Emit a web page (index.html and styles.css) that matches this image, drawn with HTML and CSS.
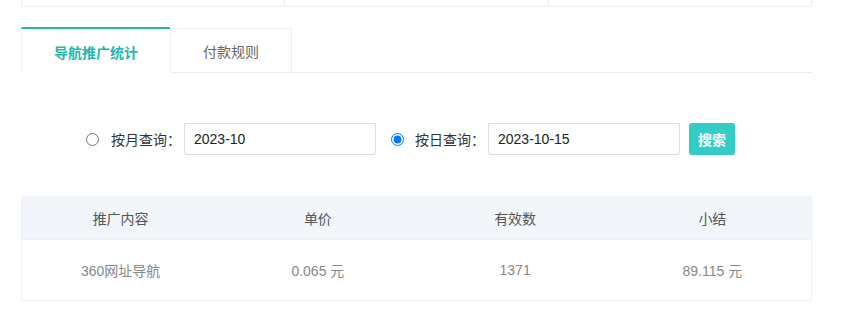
FILE: index.html
```html
<!DOCTYPE html>
<html lang="zh-CN">
<head>
<meta charset="utf-8">
<link rel="stylesheet" href="styles.css">
</head>
<body>
<div class="page">
  <div class="topbox">
    <div class="topcell"></div>
    <div class="topcell"></div>
    <div class="topcell"></div>
  </div>
  <div class="tabs">
    <div class="tab active">导航推广统计</div>
    <div class="tab">付款规则</div>
  </div>
  <div class="filters">
    <input class="radio" type="radio" name="mode">
    <span class="label">按月查询：</span>
    <input class="field" type="text" value="2023-10">
    <input class="radio radio2" type="radio" name="mode" checked>
    <span class="label">按日查询：</span>
    <input class="field" type="text" value="2023-10-15">
    <button class="btn">搜索</button>
  </div>
  <div class="table">
    <div class="row head">
      <div class="cell">推广内容</div>
      <div class="cell">单价</div>
      <div class="cell">有效数</div>
      <div class="cell">小结</div>
    </div>
    <div class="row body">
      <div class="cell">360网址导航</div>
      <div class="cell">0.065 元</div>
      <div class="cell">1371</div>
      <div class="cell">89.115 元</div>
    </div>
  </div>
</div>
</body>
</html>
```
FILE: styles.css
```css
* { box-sizing: border-box; }
html, body { margin: 0; padding: 0; background: #fff; }
body {
  font-family: "Liberation Sans", "Noto Sans CJK SC", sans-serif;
  font-size: 14px;
  color: #333;
}
.page {
  width: 791px;
  margin-left: 21px;
}
.topbox {
  display: grid;
  grid-template-columns: 263px 264px 264px;
  height: 7px;
  border: 1px solid #e9eff5;
  border-top: none;
}
.topcell { border-right: 1px solid #e9eff5; }
.topcell:last-child { border-right: none; }
.tabs {
  margin-top: 20px;
  height: 46px;
  display: flex;
  align-items: flex-end;
  border-bottom: 1px solid #e9eff5;
}
.tab {
  display: flex;
  align-items: center;
  justify-content: center;
  color: #666;
  font-size: 14px;
  background: #fff;
}
.tab.active {
  width: 149px;
  height: 46px;
  margin-bottom: -1px;
  border-top: 2px solid #1fb9b0;
  border-left: 1px solid #e9eff5;
  color: #1fb9b0;
  font-weight: 600;
  padding-top: 1px;
}
.tab:not(.active) {
  width: 122px;
  height: 44px;
  border-top: 1px solid #e9eff5;
  border-left: 1px solid #e9eff5;
  border-right: 1px solid #e9eff5;
}
.filters {
  display: flex;
  align-items: center;
  margin-top: 50px;
  height: 32px;
  padding-left: 65px;
}
.radio {
  width: 13px;
  height: 13px;
  margin: 0 12px 0 0;
}
.radio2 { margin-left: 15px; margin-right: 11px; }
.label {
  color: #333;
  font-size: 14px;
  margin-right: 3px;
}
.field {
  width: 192px;
  height: 32px;
  border: 1px solid #dcdfe6;
  border-radius: 2px;
  padding: 0 9px;
  font-family: "Liberation Sans", "Noto Sans CJK SC", sans-serif;
  font-size: 14px;
  color: #222;
  outline: none;
}
.btn {
  margin-left: 9px;
  width: 46px;
  height: 32px;
  border: none;
  border-radius: 3px;
  background: #33ccc6;
  color: #fff;
  font-family: "Liberation Sans", "Noto Sans CJK SC", sans-serif;
  font-size: 14px;
  font-weight: 600;
  padding: 0;
}
.table {
  margin-top: 41px;
  border: 1px solid #edf1f6;
  border-top: none;
}
.row {
  display: grid;
  grid-template-columns: repeat(4, 1fr);
}
.row.head {
  height: 43px;
  background: #f2f5f9;
  color: #555;
}
.row.body {
  height: 61px;
  color: #888;
  border-top: 1px solid #edf1f6;
  padding-bottom: 1px;
}
.cell {
  display: flex;
  align-items: center;
  justify-content: center;
  font-size: 14px;
}
```
